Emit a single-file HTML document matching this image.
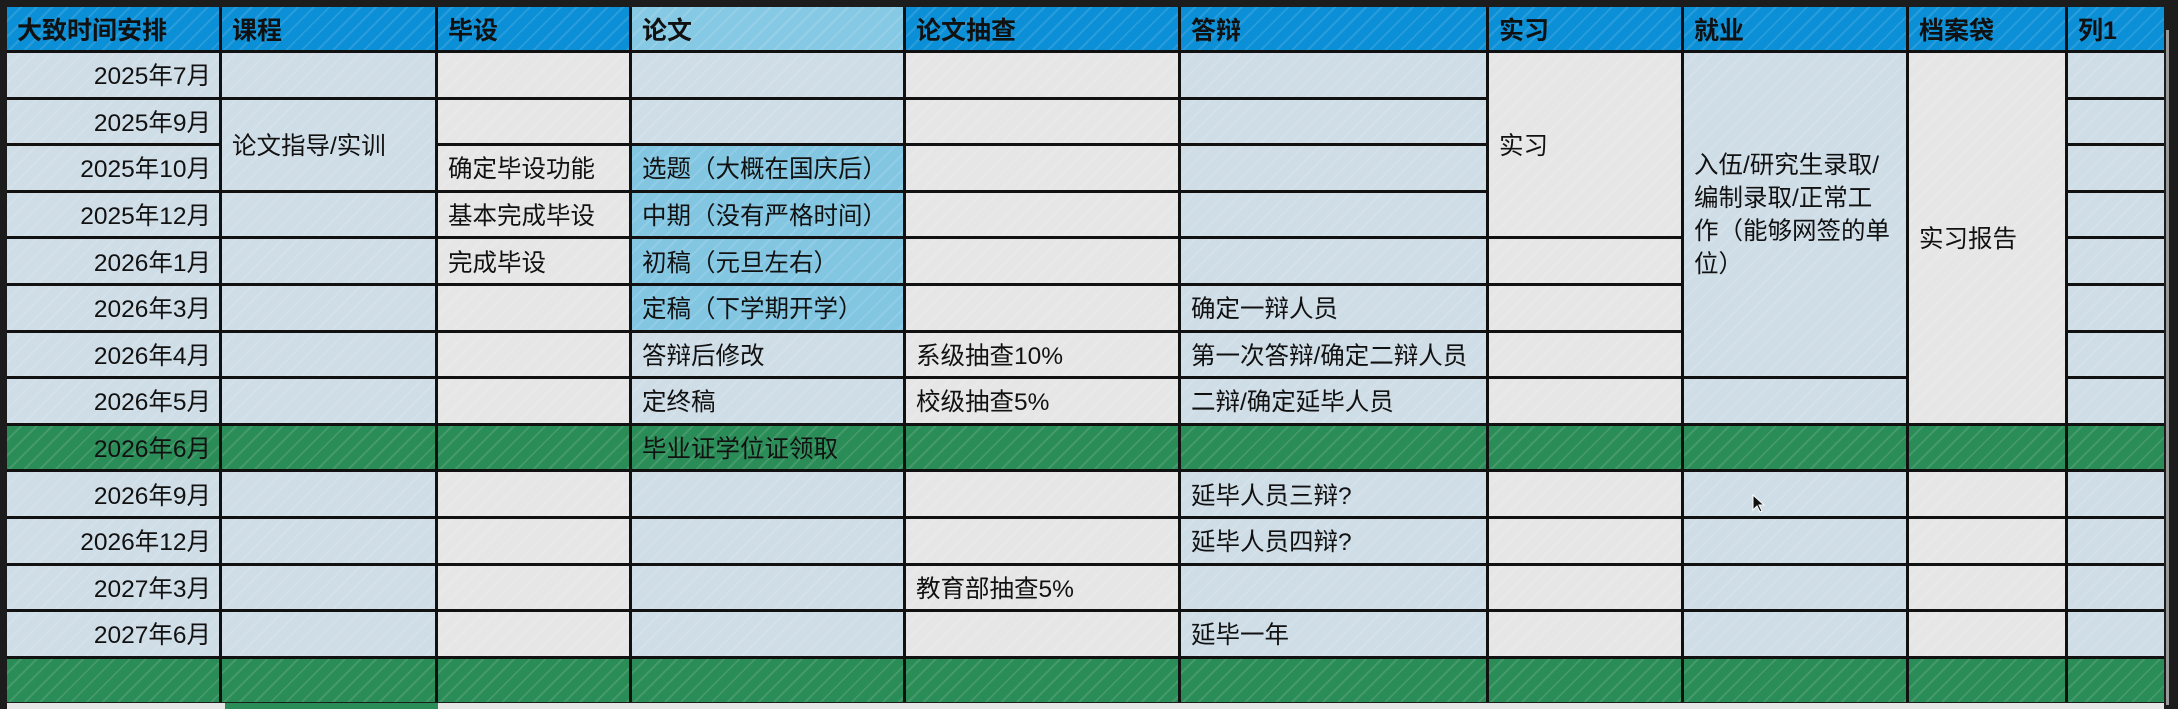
<!DOCTYPE html>
<html><head><meta charset="utf-8"><style>
html,body{margin:0;padding:0;background:#1c1c1c;width:2178px;height:709px;overflow:hidden}
body{position:relative;font-family:"Liberation Sans","Noto Sans CJK SC",sans-serif;}
#g{position:absolute;left:7px;top:7px;display:grid;background:#111;gap:3px;
grid-template-columns:212px 213px 191px 271px 272px 305px 192px 222px 156px 96px;
grid-template-rows:43px repeat(14,43.6px);}
#g>div{display:flex;align-items:center;padding-left:10px;font-size:24.5px;color:#111;white-space:nowrap;overflow:hidden;
background-image:repeating-linear-gradient(135deg,rgba(255,255,255,0) 0 9px,rgba(255,255,255,.12) 9px 11px);}
#g>div.h{font-weight:bold;font-size:25px;background-color:#0b8fd6;}
#g>div.hh{background-color:#86c9e4}
.b{background-color:#cfdde7}
.y{background-color:#e6e6e6}
.l{background-color:#82c6e2 !important}
.gr{background-color:#2a8c57 !important}
.d{justify-content:flex-end;padding-left:0!important;padding-right:8px}
.w{line-height:33px}
#strip{position:absolute;left:7px;top:703px;width:2157px;height:6px;background:#e6e6e6}
#strip2{position:absolute;left:225px;top:703px;width:213px;height:6px;background:#2a8c57}
#sb{position:absolute;left:2166px;top:30px;width:3px;height:675px;background:#999}
</style></head><body>
<div id="g">
<div class="h">大致时间安排</div><div class="h">课程</div><div class="h">毕设</div><div class="h hh">论文</div><div class="h">论文抽查</div><div class="h">答辩</div><div class="h">实习</div><div class="h">就业</div><div class="h">档案袋</div><div class="h">列1</div>

<div class="b d">2025年7月</div><div class="b"></div><div class="y"></div><div class="b"></div><div class="y"></div><div class="b"></div><div class="y" style="grid-row:span 4">实习</div><div class="b w" style="grid-row:span 7"><div>入伍/研究生录取/<br>编制录取/正常工<br>作（能够网签的单<br>位）</div></div><div class="y" style="grid-row:span 8">实习报告</div><div class="b"></div>

<div class="b d">2025年9月</div><div class="b" style="grid-row:span 2">论文指导/实训</div><div class="y"></div><div class="b"></div><div class="y"></div><div class="b"></div><div class="b"></div>

<div class="b d">2025年10月</div><div class="y">确定毕设功能</div><div class="l">选题（大概在国庆后）</div><div class="y"></div><div class="b"></div><div class="b"></div>

<div class="b d">2025年12月</div><div class="b"></div><div class="y">基本完成毕设</div><div class="l">中期（没有严格时间）</div><div class="y"></div><div class="b"></div><div class="b"></div>

<div class="b d">2026年1月</div><div class="b"></div><div class="y">完成毕设</div><div class="l">初稿（元旦左右）</div><div class="y"></div><div class="b"></div><div class="y"></div><div class="b"></div>

<div class="b d">2026年3月</div><div class="b"></div><div class="y"></div><div class="l">定稿（下学期开学）</div><div class="y"></div><div class="b">确定一辩人员</div><div class="y"></div><div class="b"></div>

<div class="b d">2026年4月</div><div class="b"></div><div class="y"></div><div class="b">答辩后修改</div><div class="y">系级抽查10%</div><div class="b">第一次答辩/确定二辩人员</div><div class="y"></div><div class="b"></div>

<div class="b d">2026年5月</div><div class="b"></div><div class="y"></div><div class="b">定终稿</div><div class="y">校级抽查5%</div><div class="b">二辩/确定延毕人员</div><div class="y"></div><div class="b"></div><div class="b"></div>

<div class="gr d">2026年6月</div><div class="gr"></div><div class="gr"></div><div class="gr">毕业证学位证领取</div><div class="gr"></div><div class="gr"></div><div class="gr"></div><div class="gr"></div><div class="gr"></div><div class="gr"></div>

<div class="b d">2026年9月</div><div class="b"></div><div class="y"></div><div class="b"></div><div class="y"></div><div class="b">延毕人员三辩?</div><div class="y"></div><div class="b"></div><div class="y"></div><div class="b"></div>

<div class="b d">2026年12月</div><div class="b"></div><div class="y"></div><div class="b"></div><div class="y"></div><div class="b">延毕人员四辩?</div><div class="y"></div><div class="b"></div><div class="y"></div><div class="b"></div>

<div class="b d">2027年3月</div><div class="b"></div><div class="y"></div><div class="b"></div><div class="y">教育部抽查5%</div><div class="b"></div><div class="y"></div><div class="b"></div><div class="y"></div><div class="b"></div>

<div class="b d">2027年6月</div><div class="b"></div><div class="y"></div><div class="b"></div><div class="y"></div><div class="b">延毕一年</div><div class="y"></div><div class="b"></div><div class="y"></div><div class="b"></div>

<div class="gr"></div><div class="gr"></div><div class="gr"></div><div class="gr"></div><div class="gr"></div><div class="gr"></div><div class="gr"></div><div class="gr"></div><div class="gr"></div><div class="gr"></div>
</div>
<div id="strip"></div><div id="strip2"></div><div id="sb"></div>
<svg style="position:absolute;left:1752px;top:494px" width="14" height="20" viewBox="0 0 14 20"><path d="M1 1 L1 16 L5 12 L8 18 L10 17 L7 11 L12 11 Z" fill="#111" stroke="#fff" stroke-width="1"/></svg>
</body></html>
